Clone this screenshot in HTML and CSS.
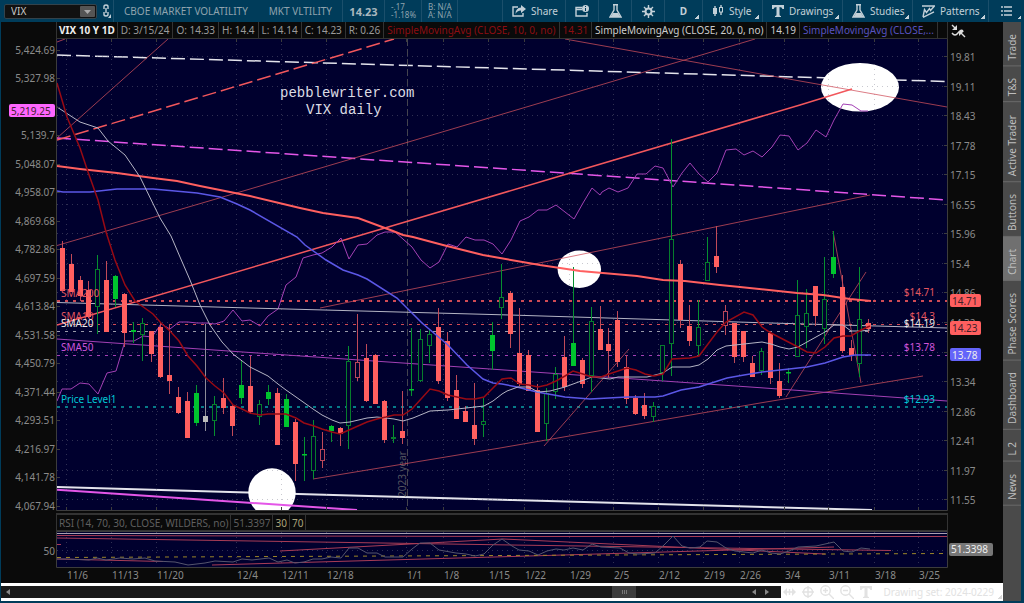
FILE: index.html
```html
<!DOCTYPE html>
<html lang="en">
<head>
    <meta charset="UTF-8">
    <meta name="viewport" content="width=device-width, initial-scale=1.0">
    <title>VIX Chart</title>
    <link rel="stylesheet" href="styles.css">
</head>
<body>
    <div class="app">
        <header class="toolbar">
            <div class="symbol-box">
                <div class="symbol">
                    <select aria-label="Symbol"><option>VIX</option></select>
                    <svg class="arrow" viewBox="0 0 15 11"><rect width="15" height="11" rx="1"/><path d="M4 4h7l-3.500 4z"/></svg>
                </div>
                <button class="link-btn" aria-label="Link symbol">
                    <svg width="10" height="15" viewBox="0 0 10 15"><path class="stroke" d="M2 5V2.500q0-1.500 2-1.500t2 1.500V5M2 8v2.500Q2 12 4 12t2-1.500V8M4 4v5"/><path class="fill" d="M9 10v4H6z"/></svg>
                </button>
            </div>
            <div class="company"><span>CBOE MARKET VOLATILITY</span><span>MKT VLTILITY</span></div>
            <div class="last">14.23</div>
            <div class="small">-.17<br>-1.18%</div>
            <div class="small">B: N/A<br>A: N/A</div>
            <div></div>
            <button>
                <svg width="14" height="12" viewBox="0 0 14 12"><path class="stroke" d="M6 2H1v9h10V8"/><path class="fill" d="M9 0l5 4-5 4V5.500Q5 5.500 3.500 9 3.500 3 9 2.500z"/></svg>
                Share
            </button>
            <button class="center" aria-label="Messages">
                <svg width="14" height="12" viewBox="0 0 14 12"><path class="stroke" d="M7 2.500H1v8.500h11V8M1 4.500h6"/><circle class="fill" cx="10.500" cy="3.500" r="3.500"/><path class="mark" d="M10.500 1v1M10.500 3v3"/></svg>
            </button>
            <button class="center" aria-label="Flask">
                <svg width="13" height="14" viewBox="0 0 13 14"><path class="stroke" d="M4 .7h5M5 1v5L1 13h11L8 6V1"/><path class="fill" d="M4 9h5l2.500 4h-10z"/></svg>
            </button>
            <button class="center" aria-label="Settings">
                <svg width="13" height="13" viewBox="0 0 13 13"><circle class="ring" cx="6.500" cy="6.500" r="3"/><path class="stroke" d="M6.500 0v3M6.500 10v3M0 6.500h3M10 6.500h3M2 2l2 2M9 9l2 2M11 2L9 4M4 9l-2 2"/></svg>
            </button>
            <button class="center more bold">D</button>
            <button class="more">
                <svg width="12" height="12" viewBox="0 0 12 12"><path class="stroke" d="M3 1v10M9 0v2.500M9 7v3"/><rect class="fill" x="1" y="3" width="4" height="6"/><rect class="stroke hollow" x="7.500" y="2.500" width="3" height="4.500"/></svg>
                Style
            </button>
            <button class="more">
                <svg width="12" height="12" viewBox="0 0 12 12"><path class="fill" d="M0 0h12v4h-1.500Q10 2 7.500 2v7.500Q7.500 11 9 11v1H3v-1q1.500 0 1.500-1.500V2Q2 2 1.500 4H0z"/></svg>
                Drawings
            </button>
            <button class="more">
                <svg width="13" height="14" viewBox="0 0 13 14"><path class="stroke" d="M4 .7h5M5 1v5L1 13h11L8 6V1"/><path class="fill" d="M4 9h5l2.500 4h-10z"/></svg>
                Studies
            </button>
            <button class="more">
                <svg width="13" height="13" viewBox="0 0 13 13"><path class="stroke" d="M0 1h13M1 12L2.500 4.500l2 3 3-4 1 2 3.500-4M1 12.300l11-5.500"/></svg>
                Patterns
            </button>
            <button class="center more" aria-label="List">
                <svg width="11" height="10" viewBox="0 0 11 10"><path class="stroke" d="M0 1h2M3 1h8M0 5h2M3 5h8M0 9h2M3 9h8"/></svg>
            </button>
        </header>

        <div class="workspace">
            <main class="charts">
                <div class="strip">
                    <div class="cells">
                        <span class="title">VIX 10 Y 1D</span>
                        <span>D: 3/15/24</span>
                        <span>O: 14.33</span>
                        <span>H: 14.4</span>
                        <span>L: 14.14</span>
                        <span>C: 14.23</span>
                        <span>R: 0.26</span>
                        <span class="sma10">SimpleMovingAvg (CLOSE, 10, 0, no)</span>
                        <span class="sma10">14.31</span>
                        <span class="sma20">SimpleMovingAvg (CLOSE, 20, 0, no)</span>
                        <span class="sma20">14.19</span>
                        <span class="sma50">SimpleMovingAvg (CLOSE,...</span>
                    </div>
                    <button class="collapse" aria-label="Collapse">
                        <svg width="15" height="14" viewBox="0 0 15 14"><path class="stroke" d="M1 1l4 4M1 9q3 4 6 0t5-2M14 13L9 8"/><path class="fill" d="M6 1v5H1zM8 7h5l-5 5z"/></svg>
                    </button>
                </div>

                <svg class="chart" id="price" viewBox="1 39 1002 472">
                    <defs><clipPath id="plot"><rect x="57" y="39" width="890" height="471"/></clipPath></defs>
                    <rect class="plot-bg" x="57" y="39" width="890" height="471"/>
                    <g clip-path="url(#plot)">
                        <path class="dash white" d="M57 55L947 81.500"/>
                        <g class="ovals">
                            <ellipse cx="860" cy="87.300" rx="39" ry="24.300"/>
                            <ellipse cx="579.300" cy="269.300" rx="21.700" ry="18.700"/>
                        </g>
                        <path class="line heavy white" d="M57 487L512 500 872 510"/>
                        <g class="ovals"><ellipse cx="272" cy="492.500" rx="23.700" ry="24.200"/></g>
                        <g class="grid" id="grid"></g>
                        <path class="year-line" d="M407.500 39V510"/>
                        <text class="year" transform="translate(406 497) rotate(-90)">2023 year</text>

                        <path class="level red heavy" d="M57 301H947"/>
                        <path class="level red" d="M57 324.500H947"/>
                        <path class="level grey" d="M57 331.500H947"/>
                        <path class="level purple" d="M57 355.500H947"/>
                        <path class="level teal heavy" d="M57 407H947"/>

                        <path class="line heavy magenta" d="M57 489.700L357 510"/>
                        <path class="dash magenta" d="M57 138L260 152 550 172 947 200"/>
                        <path class="dash salmon" d="M57 140L394 39"/>
                        <path class="trend" d="M57 42L65 39M57 138L168 39M57 245.500L250 189 550 100 755 39M565 39L800 81 947 107"/>
                        <path class="trend" d="M320 308L500 271 652 240 870 195M313 479L500 448 760 403 923 376"/>
                        <path class="trend" d="M544 446L629 349M786 397L866 272M833 231L861 383"/>
                        <path class="line salmon" d="M57 325L277 260 550 179 800 105 852 89"/>
                        <path class="line thin purple" d="M57 339L250 352.500 500 369.700 760 387.700 947 401"/>
                        <path class="line thin purple" id="spx"/>
                        <path class="line thin pale" d="M57 302.500L250 308 510 315 760 322.700 947 328"/>
                        <g id="candles"></g>
                        <path class="line sma200" id="sma200"/>
                        <path class="line sma50" id="sma50"/>
                        <path class="line thin pale" id="sma20"/>
                        <path class="line sma10" id="sma10"/>
                    </g>
                    <path class="frame" d="M56.500 39V510.500H947.500V39"/>
                    <g class="ticks" id="ticks"></g>
                    <g class="labels">
                        <text class="red" x="61" y="297">SMA200</text>
                        <text class="red" x="61" y="320">SMA10</text>
                        <text class="white" x="61" y="327">SMA20</text>
                        <text class="purple" x="61" y="351">SMA50</text>
                        <text class="cyan" x="61" y="403">Price Level1</text>
                    </g>
                    <g class="labels end">
                        <text class="red" x="935" y="296">$14.71</text>
                        <text class="red" x="935" y="320">$14.3</text>
                        <text class="white" x="935" y="327">$14.19</text>
                        <text class="purple" x="935" y="351">$13.78</text>
                        <text class="cyan" x="935" y="403">$12.93</text>
                    </g>
                    <g class="note">
                        <text x="280" y="97">pebblewriter.com</text>
                        <text x="306" y="114">VIX daily</text>
                    </g>
                    <g class="axis" id="axes"></g>
                    <g class="badge">
                        <rect class="b-pink" x="9" y="104" width="46" height="13" rx="2"/><text x="11" y="115">5,219.25</text>
                        <rect class="b-red" x="950" y="294" width="31" height="13" rx="2"/><text x="952" y="305">14.71</text>
                        <rect class="b-red" x="950" y="321" width="31" height="14" rx="2"/><text x="952" y="332">14.23</text>
                        <rect class="b-blue" x="950" y="348" width="31" height="13" rx="2"/><text class="light" x="952" y="359">13.78</text>
                    </g>
                </svg>

                <div class="strip rsi-strip">
                    <div class="cells dim">
                        <span>RSI (14, 70, 30, CLOSE, WILDERS, no)</span>
                        <span>51.3397</span>
                        <span class="limit">30</span>
                        <span class="limit">70</span>
                    </div>
                </div>

                <svg class="chart" id="rsi" viewBox="1 531 1002 51">
                    <rect class="plot-bg" x="57" y="531" width="890" height="36"/>
                    <g class="grid" id="rsi-grid"></g>
                    <path class="over" d="M57 533.500H947"/>
                    <path class="rsi-red" d="M57 535.500L512 536.500H947M57 538L512 545 891 550.500M280 551L503 539 825 554M212 565L512 556.500 834 547M57 559L163 561.500M57 544.500H61"/>
                    <path class="rsi-level" d="M57 557.500L947 553.500"/>
                    <path class="rsi-line" id="rsi-line"/>
                    <path class="frame" d="M56.500 531.500H947.500V567.500H56.500z"/>
                    <g class="axis" id="dates"></g>
                    <g class="badge">
                        <rect class="b-grey" x="949" y="543" width="44" height="13" rx="2"/><text class="light" x="951" y="553">51.3398</text>
                    </g>
                </svg>

                <footer class="bottom">
                    <div class="scroll">
                        <button aria-label="Scroll left"><svg width="4" height="6" viewBox="0 0 4 6"><path d="M4 0v6L0 3z"/></svg></button>
                        <div class="track"><div class="thumb"></div></div>
                        <button aria-label="Step left"><svg width="4" height="6" viewBox="0 0 4 6"><path d="M4 0v6L0 3z"/></svg></button>
                        <button aria-label="Step right"><svg width="4" height="6" viewBox="0 0 4 6"><path d="M0 0v6l4-3z"/></svg></button>
                    </div>
                    <div class="tools">
                        <button aria-label="Pan"><svg width="13" height="10" viewBox="0 0 13 10"><path class="fill" d="M0 5l4-4v8zM13 5L9 1v8z"/><path class="stroke" d="M3 5h7M6.500 2v6"/></svg></button>
                        <button aria-label="Crosshair"><svg width="12" height="12" viewBox="0 0 12 12"><circle class="stroke" cx="6" cy="6" r="4.500"/><path class="stroke" d="M6 0v12M0 6h12"/></svg></button>
                        <button aria-label="Zoom in"><svg width="14" height="14" viewBox="0 0 14 14"><circle class="stroke" cx="5.500" cy="5.500" r="4.700"/><path class="stroke" d="M9 9l5 5M3 5.500h5M5.500 3v5"/></svg></button>
                        <button aria-label="Zoom out"><svg width="14" height="14" viewBox="0 0 14 14"><circle class="stroke" cx="5.500" cy="5.500" r="4.700"/><path class="stroke" d="M9 9l5 5M3 5.500h5"/></svg></button>
                        <button aria-label="Text"><svg width="12" height="12" viewBox="0 0 12 12"><path class="fill" d="M0 0h12v4h-1.500Q10 2 7.500 2v7.500Q7.500 11 9 11v1H3v-1q1.500 0 1.500-1.500V2Q2 2 1.500 4H0z"/></svg></button>
                    </div>
                    <button class="drawing-set">Drawing set: 2024-0229</button>
                </footer>
            </main>

            <nav class="side">
                <button>Trade</button>
                <button>T&amp;S</button>
                <button>Active Trader</button>
                <button>Buttons</button>
                <button class="active">Chart</button>
                <button>Phase Scores</button>
                <button>Dashboard</button>
                <button>L 2</button>
                <button>News</button>
            </nav>
        </div>
    </div>
    <script src="script.js"></script>
</body>
</html>
```
FILE: styles.css
```css
* {
    box-sizing: border-box;
}

body {
    margin: 0;
    background-color: #003c5a;
    color: #9a9a9a;
    font-family: "Noto Sans", "Open Sans", sans-serif;
    font-size: 10px;
}

button {
    padding: 0;
    border: none;
    background: none;
    color: inherit;
    font: inherit;
    cursor: pointer;
}

svg {
    display: block;
}

.stroke {
    fill: none;
    stroke: currentColor;
    stroke-width: 1.4;
}

.fill {
    fill: currentColor;
}

.app {
    display: flex;
    flex-direction: column;
    min-height: 100vh;
}

/* toolbar */
.toolbar {
    display: grid;
    grid-template-columns: 114px 229px 42px 37px 36px 1fr 63px 33px 33px 33px 38px 60px 80px 70px 76px 35px;
    height: 22px;
    background-color: #003c5a;
    color: #8fa3ae;
}

.toolbar > * {
    display: flex;
    align-items: center;
    gap: 5px;
    padding-left: 9px;
    border-right: 1px solid #1b4f6b;
}

.toolbar > :last-child {
    border-right: none;
}

.toolbar > button {
    color: #c3d0d8;
    white-space: nowrap;
}

.toolbar > .symbol-box {
    padding: 0 0 0 4px;
}

.toolbar > .center {
    justify-content: center;
    padding: 0;
}

.more {
    background: linear-gradient(135deg, transparent 50%, #c3d0d8 50%) no-repeat right 3px bottom 3px / 4px 4px;
}

.bold {
    font-weight: bold;
}

.symbol {
    display: grid;
    flex: 1;
    align-items: center;
    height: 15px;
    border: 1px solid #33434c;
    border-radius: 2px;
    background-color: #111;
}

.symbol select,
.symbol .arrow {
    grid-area: 1 / 1;
}

.symbol select {
    appearance: none;
    width: 100%;
    height: 13px;
    padding: 0 20px 0 6px;
    border: none;
    background: none;
    color: #c8c8c8;
    font: inherit;
    line-height: 13px;
}

.arrow {
    justify-self: end;
    width: 15px;
    height: 11px;
    margin-right: 1px;
    pointer-events: none;
}

.arrow rect {
    fill: #555;
}

.arrow path {
    fill: #aaa;
}

.link-btn {
    width: 11px;
    color: #c3d0d8;
}

.toolbar > .company {
    justify-content: space-between;
    padding: 0 10px;
}

.toolbar > .last {
    justify-content: center;
    padding: 0;
    color: #a9b7bf;
    font-size: 11px;
    font-weight: bold;
}

.toolbar > .small {
    padding-left: 6px;
    font-size: 8px;
    line-height: 8px;
}

.mark {
    fill: none;
    stroke: #003c5a;
}

.ring {
    fill: none;
    stroke: currentColor;
    stroke-width: 2;
}

.hollow {
    stroke-width: 1;
}

/* workspace */
.workspace {
    display: flex;
    flex: 1;
    padding: 0 3px 2px 1px;
}

.charts {
    display: flex;
    flex: 1;
    flex-direction: column;
    min-width: 0;
    background-color: #0a0a0a;
}

.strip {
    display: grid;
    grid-template-columns: 891fr 55fr;
    height: 17px;
    padding-left: 5.5%;
}

.cells {
    display: flex;
    border: 1px solid #333;
    border-top: none;
    overflow: hidden;
    white-space: nowrap;
}

.cells span {
    padding: 0 3px;
    border-right: 1px solid #333;
    line-height: 16px;
}

.cells .title {
    padding: 0 2px;
    color: #eee;
    font-weight: bold;
}

.cells .sma10 {
    color: #8c0d12;
}

.cells .sma20 {
    color: #ccc;
}

.cells .sma50 {
    color: #5853c0;
}

.collapse {
    padding-left: 3px;
    color: #ddd;
}

.rsi-strip {
    height: 20px;
    padding-top: 2px;
}

.dim {
    border-top: 2px solid #333;
    color: #5f5f5f;
}

.dim span {
    padding: 0 2px;
}

.dim .limit {
    color: #aba57c;
}

/* charts */
.chart {
    width: 100%;
    height: auto;
    overflow: visible;
}

.plot-bg {
    fill: #00002e;
}

.ovals {
    fill: #fff;
}

.grid {
    fill: none;
    stroke: #77778a;
    stroke-dasharray: 1 4;
    stroke-opacity: 0.4;
}

.year-line {
    fill: none;
    stroke: #44444f;
    stroke-dasharray: 7 3;
}

.year {
    fill: #55555f;
}

.frame,
.ticks {
    fill: none;
    stroke: #3c3c3c;
}

.line,
.dash,
.level,
.trend {
    fill: none;
    stroke-width: 1.5;
}

.dash {
    stroke-dasharray: 14 5;
}

.level {
    stroke-dasharray: 3 5;
    stroke-width: 1;
}

.trend {
    stroke: #d0505c;
    stroke-opacity: 0.75;
    stroke-width: 1;
}

.heavy {
    stroke-width: 2;
}

.thin {
    stroke-width: 1;
}

path.white {
    stroke: #e4e4ec;
}

path.pale {
    stroke: #b4b4c4;
}

path.grey {
    stroke: #9a9aaa;
}

path.magenta {
    stroke: #e456e8;
}

path.purple {
    stroke: #a340b4;
}

path.salmon {
    stroke: #f2575c;
}

path.red {
    stroke: #d04a54;
}

path.teal {
    stroke: #077a88;
}

path.sma10 {
    stroke: #980a14;
}

path.sma50 {
    stroke: #5b57e6;
}

path.sma200 {
    stroke: #ff5f5f;
    stroke-width: 2;
}

.up {
    fill: #00c42e;
    stroke: #00c42e;
}

.up-open {
    fill: #00002e;
    stroke: #067d2c;
}

.down {
    fill: #ff5f5f;
    stroke: #ff5f5f;
}

.down-open {
    fill: #00002e;
    stroke: #b8465a;
}

.flat {
    fill: #bbb;
    stroke: #bbb;
}

.wick-up {
    stroke: #069030;
}

.wick-down {
    stroke: #c04a58;
}

.wick-flat {
    stroke: #8c8c98;
}

.labels text.red {
    fill: #e4555f;
}

.labels text.white {
    fill: #e8e8e8;
}

.labels text.purple {
    fill: #d055dc;
}

.labels text.cyan {
    fill: #00c8d6;
}

.end,
.axis .left {
    text-anchor: end;
}

.note {
    fill: #dcdce4;
    font-family: "Liberation Mono", monospace;
    font-size: 14px;
}

.axis {
    fill: #8a8a8a;
}

.badge text {
    fill: #40202a;
}

.badge text.light {
    fill: #eee;
}

.b-pink {
    fill: #ff66ff;
}

.b-red {
    fill: #ff5f5f;
}

.b-blue {
    fill: #6464fa;
}

.b-grey {
    fill: #777;
}

.over {
    stroke: #a8a0b0;
}

.rsi-red {
    fill: none;
    stroke: #a83c56;
}

.rsi-line {
    fill: none;
    stroke: #55556c;
}

.rsi-level {
    stroke: #9c8628;
    stroke-dasharray: 4 5;
}

/* bottom bar */
.bottom {
    display: flex;
    flex: 1;
    align-items: center;
    border-top: 1px solid #0a0a0a;
    background-color: #fff;
    color: #e2e2e2;
}

.scroll {
    display: flex;
    flex: 1;
    align-items: center;
    height: 12px;
    padding: 0 4px;
    background-color: #1a1a1a;
}

.scroll button {
    width: 13px;
    padding-left: 1px;
}

.scroll path {
    fill: #888;
}

.track {
    flex: 1;
    height: 12px;
}

.thumb {
    width: 24px;
    height: 12px;
    margin-left: 81%;
    background: repeating-linear-gradient(90deg, #777 0 1px, transparent 1px 2px) no-repeat center / 5px 4px #3c3c3c;
}

.tools {
    display: flex;
    align-items: center;
    gap: 6px;
    padding: 0 11px 0 2px;
}

.drawing-set {
    padding-right: 9px;
    background: linear-gradient(135deg, transparent 50%, #d8d8d8 50%) no-repeat right 1px bottom / 4px 4px;
}

/* side tabs */
.side {
    display: flex;
    flex-direction: column;
    width: 18px;
    background-color: #4a4a4a;
}

/* rotated half a turn, so top and bottom swap on screen */
.side button {
    padding: 5px 0 12px;
    border-top: 1px solid #6a6a6a;
    color: #bdbdbd;
    line-height: 18px;
    writing-mode: vertical-rl;
    transform: rotate(180deg);
}

.side .active {
    background-color: #707070;
}
```
FILE: script.js
```javascript
// high, body top, body bottom, low, kind (R/G filled, r/g hollow, W unchanged)
const candles = [
    [241, 248, 291, 291, 'R'], [254, 264, 292, 292, 'R'], [276, 280, 296, 301, 'R'], [281, 290, 317, 318, 'R'],
    [255, 269, 307, 334, 'g'], [261, 280, 332, 332, 'R'], [275, 276, 299, 307, 'G'], [293, 294, 333, 347, 'R'],
    [322, 330, 332, 343, 'G'], [318, 323, 335, 361, 'g'], [331, 331, 354, 362, 'R'], [322, 327, 377, 378, 'R'],
    [324, 375, 381, 394, 'R'], [387, 397, 413, 414, 'R'], [392, 401, 438, 438, 'R'], [385, 393, 423, 426, 'G'],
    [324, 416, 422, 431, 'W'], [396, 404, 421, 436, 'g'], [378, 398, 408, 414, 'R'], [404, 406, 426, 436, 'R'],
    [360, 385, 398, 404, 'G'], [356, 386, 412, 414, 'R'], [400, 404, 417, 425, 'g'], [385, 392, 399, 405, 'G'],
    [388, 393, 445, 445, 'R'], [394, 399, 427, 427, 'G'], [419, 422, 464, 481, 'R'], [437, 454, 455, 481, 'G'],
    [420, 436, 471, 479, 'g'], [432, 449, 461, 468, 'r'], [425, 426, 431, 442, 'G'], [427, 428, 434, 446, 'R'],
    [346, 361, 426, 449, 'g'], [314, 362, 378, 381, 'r'], [344, 358, 401, 402, 'R'], [354, 355, 404, 404, 'R'],
    [400, 401, 440, 443, 'R'], [425, 437, 439, 443, 'g'], [391, 431, 438, 444, 'R'], [328, 389, 390, 396, 'G'],
    [329, 339, 381, 382, 'g'], [329, 334, 346, 363, 'g'], [308, 327, 381, 384, 'R'], [332, 341, 398, 401, 'R'],
    [375, 390, 419, 419, 'R'], [406, 411, 422, 422, 'R'], [383, 425, 439, 445, 'R'], [398, 421, 425, 437, 'g'],
    [322, 335, 351, 370, 'G'], [264, 297, 308, 319, 'g'], [291, 293, 334, 348, 'R'], [308, 353, 384, 386, 'R'],
    [350, 355, 391, 391, 'R'], [384, 390, 432, 432, 'R'], [388, 393, 424, 441, 'g'], [367, 374, 392, 399, 'g'],
    [336, 357, 387, 391, 'R'], [267, 343, 366, 366, 'G'], [358, 360, 384, 388, 'R'], [307, 321, 376, 392, 'g'],
    [306, 329, 350, 350, 'R'], [328, 344, 351, 378, 'R'], [311, 320, 362, 367, 'R'], [355, 367, 399, 404, 'R'],
    [395, 398, 414, 415, 'R'], [393, 405, 416, 419, 'R'], [402, 406, 417, 422, 'g'], [345, 345, 373, 381, 'g'],
    [139, 239, 344, 376, 'g'], [260, 264, 320, 328, 'R'], [305, 326, 341, 346, 'R'], [300, 327, 346, 356, 'g'],
    [237, 262, 281, 281, 'g'], [226, 256, 267, 273, 'R'], [305, 311, 326, 335, 'r'], [323, 323, 357, 363, 'R'],
    [331, 331, 357, 362, 'R'], [356, 363, 377, 377, 'R'], [348, 351, 371, 375, 'g'], [331, 333, 378, 384, 'R'],
    [363, 381, 396, 398, 'R'], [368, 372, 373, 383, 'G'], [280, 315, 357, 357, 'g'], [289, 313, 327, 348, 'g'],
    [286, 286, 316, 326, 'R'], [257, 299, 329, 344, 'g'], [231, 257, 274, 278, 'G'], [275, 287, 351, 353, 'R'],
    [340, 348, 356, 361, 'R'], [267, 319, 364, 377, 'g'], [319, 323, 329, 333, 'R']
];

const bodyClass = { R: 'down', r: 'down-open', G: 'up', g: 'up-open', W: 'flat' };
const wickClass = { R: 'wick-down', r: 'wick-down', G: 'wick-up', g: 'wick-up', W: 'wick-flat' };

const series = {
    sma10: '57,83 67,117 80,148 88,172 98,200 106,232 115,260 125,285 135,301 153,314 161,323 170,331 179,341 188,356 197,366 206,378 215,386 224,393 233,405 242,409 250,413 260,415 268,414 286,414 296,418 304,423 314,426 322,429 332,432 340,434 349,430 367,422 377,419 386,417 394,415 403,415 412,409 421,399 430,389 439,391 448,395 457,397 466,399 475,399 484,397 493,388 502,379 511,378 520,384 529,385 538,387 547,385 556,381 565,376 573,371 583,374 592,377 601,377 609,374 627,368 636,370 645,374 654,376 663,374 672,359 690,358 699,356 708,344 717,332 726,322 744,312 753,315 762,327 771,333 798,347 807,352 816,353 825,347 834,338 843,336 851,336 861,330 870,326',
    sma20: '57,107 80,122 98,128 108,141 125,155 140,177 160,218 171,236 180,257 190,280 200,305 210,325 222,342 233,354 250,367 268,376 278,384 286,390 296,397 313,409 322,415 332,420 340,423 350,422 367,418 377,417 386,418 394,419 403,421 413,418 430,411 448,410 466,408 484,406 493,401 502,394 507,391 518,387 529,387 538,392 550,391 565,387 592,377 610,379 618,377 647,377 663,373 672,367 690,367 699,365 708,359 717,350 726,346 744,344 762,342 771,344 780,347 789,349 798,347 807,342 825,332 834,325 843,325 851,331 861,331 870,330',
    sma50: '57,191 63,192 90,192 117,189 153,189 197,193 220,197 237,204 250,210 297,237 305,245 326,260 343,270 358,275 367,279 397,298 422,323 448,345 467,365 483,379 493,383 502,384 517,387 537,392 565,397 590,399 627,397 655,397 663,396 681,390 699,387 727,378 744,375 762,372 807,367 825,363 843,357 855,355 871,355',
    sma200: '57,166 80,169 117,173 153,178 177,181 200,186 250,196 300,208 323,213 358,218 393,231 403,235 413,237 443,245 483,255 500,258 540,265 580,271 637,276 663,280 685,281 720,285 740,287 797,293 823,295 850,299 871,301',
    spx: '57,401 62,389 71,389 80,383 89,384 98,394 107,373 116,371 125,341 134,341 143,336 152,337 161,324 170,329 179,322 188,322 197,323 206,323 215,324 224,321 233,310 242,321 250,320 260,326 268,316 278,309 286,285 296,277 303,258 313,255 322,253 332,247 341,238 349,259 358,245 367,244 377,235 385,232 395,232 412,247 421,260 430,268 439,262 448,244 457,247 466,237 475,240 484,240 493,244 502,254 511,240 520,221 529,217 538,210 547,210 556,205 565,212 574,219 583,203 592,188 600,195 602,192 609,188 618,192 628,188 637,174 646,174 655,166 663,168 673,187 682,173 690,163 699,174 708,182 717,173 726,150 736,149 744,155 753,151 762,157 772,147 780,135 789,136 798,150 807,143 816,130 826,137 834,120 843,104 852,105 861,111 868,111',
    'rsi-line': '57,559 67,559 89,560 97,558 106,560 120,558 133,559 145,558 155,561 175,562 188,565 205,563 215,561 233,562 242,559 252,560 269,558 278,562 287,560 295,563 304,562 313,559 322,559 331,557 341,558 349,548 358,548 367,553 377,553 385,557 403,557 412,549 420,543 430,543 439,550 456,553 466,554 475,556 484,554 493,545 502,539 512,546 519,550 529,551 538,555 547,551 556,549 564,550 573,548 583,550 592,544 601,547 620,548 629,553 638,554 655,553 664,545 673,536 682,546 690,548 700,547 707,541 717,542 726,548 735,551 744,552 753,553 762,550 771,553 780,554 789,551 798,547 816,546 834,542 843,551 852,552 861,548 870,549'
};

const leftLabels = ['5,424.69', '5,327.98', '', '5,139.7', '5,048.07', '4,958.07', '4,869.68', '4,782.86', '4,697.59', '4,613.84', '4,531.58', '4,450.79', '4,371.44', '4,293.51', '4,216.97', '4,141.78', '4,067.94'];
const rightLabels = ['19.81', '19.11', '18.43', '17.78', '17.15', '16.55', '15.96', '15.4', '14.86', '14.32', '', '13.34', '12.86', '12.41', '11.97', '11.55'];
const dates = [['11/6', 67], ['11/13', 112], ['11/20', 157], ['12/4', 237], ['12/11', 282], ['12/18', 327], ['1/1', 407], ['1/8', 444], ['1/15', 489], ['1/22', 525], ['1/29', 570], ['2/5', 614], ['2/12', 659], ['2/19', 704], ['2/26', 740], ['3/4', 785], ['3/11', 829], ['3/18', 875], ['3/25', 919]];

function set(id, html) {
    document.getElementById(id).innerHTML = html;
}

for (const id in series) {
    document.getElementById(id).setAttribute('d', 'M' + series[id]);
}

set('candles', candles.map(([high, top, bottom, low, kind], i) => {
    const x = Math.round(62.6 + i * 8.965) - 0.5;
    return `<path class="${wickClass[kind]}" d="M${x} ${high}V${low}"/>` +
        `<rect class="${bodyClass[kind]}" x="${x - 2}" y="${top + 0.5}" width="4" height="${Math.max(bottom - top - 1, 0.5)}"/>`;
}).join(''));

let grid = '';
let ticks = '';
let axes = '';
leftLabels.forEach((label, i) => {
    const y = Math.round(49.5 + i * 28.53);
    ticks += `<path d="M57 ${y + 0.5}h3"/>`;
    axes += `<text class="left" x="55" y="${y + 4}">${label}</text>`;
});
rightLabels.forEach((label, i) => {
    const y = Math.round(57 + i * 29.55);
    grid += `<path d="M57 ${y - 0.5}H947"/>`;
    ticks += `<path d="M944 ${y - 0.5}h3"/>`;
    axes += `<text x="950" y="${y + 4}">${label}</text>`;
});

let rsiGrid = '<path d="M57 550.5H947"/>';
let dateText = '<text class="left" x="55" y="555">50</text>';
dates.forEach(([label, x]) => {
    // the new year has its own dashed line
    if (label !== '1/1') {
        grid += `<path d="M${x - 0.5} 39V510"/>`;
    }
    ticks += `<path d="M${x - 0.5} 39v3M${x - 0.5} 507v3"/>`;
    rsiGrid += `<path d="M${x - 0.5} 532V567"/>`;
    dateText += `<text x="${x}" y="579">${label}</text>`;
});

set('grid', grid);
set('ticks', ticks);
set('axes', axes);
set('rsi-grid', rsiGrid);
set('dates', dateText);
```
